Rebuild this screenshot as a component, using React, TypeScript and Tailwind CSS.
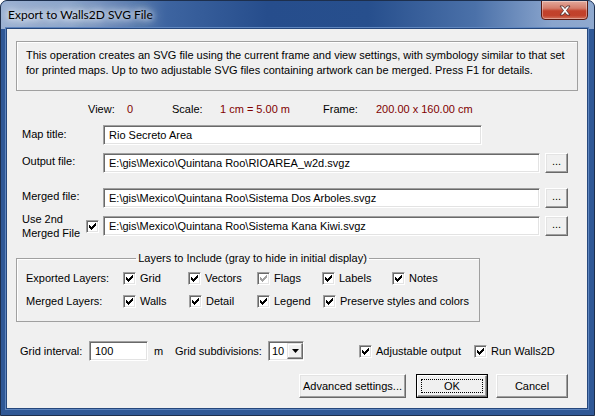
import React from "react";

const FONT = "font-['Liberation_Sans',Arial,sans-serif]";

function Check({ gray = false }: { gray?: boolean }) {
  return (
    <div
      className={`w-[13px] h-[13px] shrink-0 bg-white border border-t-[#a0a0a0] border-l-[#a0a0a0] border-r-white border-b-white shadow-[inset_1px_1px_0_#696969,inset_-1px_-1px_0_#e3e3e3] flex items-center justify-center`}
    >
      <svg width="7" height="7" viewBox="0 0 7 7" shapeRendering="crispEdges">
        <path
          d="M6 0h1v3h-1v1h-1v1h-1v1h-1v1h-1v-1h-1v-1h-1v-3h1v1h1v1h1v-1h1v-1h1z"
          fill={gray ? "#a0a0a0" : "#000"}
        />
      </svg>
    </div>
  );
}

function Field({ w, value }: { w: string; value: string }) {
  return (
    <div
      className={`h-[20px] ${w} shrink-0 bg-white border border-t-[#a0a0a0] border-l-[#a0a0a0] border-r-white border-b-white shadow-[inset_1px_1px_0_#696969,inset_-1px_-1px_0_#e3e3e3] flex items-center pl-[5px] text-[11px] text-black whitespace-nowrap overflow-hidden`}
    >
      {value}
    </div>
  );
}

function Btn({
  w,
  h,
  children,
  def = false,
}: {
  w: string;
  h: string;
  children: React.ReactNode;
  def?: boolean;
}) {
  if (def) {
    return (
      <div className={`${w} ${h} shrink-0 border border-black bg-[#f0f0f0]`}>
        <div className="w-full h-full border border-t-white border-l-white border-r-[#696969] border-b-[#696969] shadow-[inset_-1px_-1px_0_#a0a0a0] flex items-center justify-center p-[3px]">
          <div className="w-full h-full border border-dotted border-black flex items-center justify-center text-[11px] text-black">
            {children}
          </div>
        </div>
      </div>
    );
  }
  return (
    <div
      className={`${w} ${h} shrink-0 bg-[#f0f0f0] border border-t-white border-l-white border-r-[#696969] border-b-[#696969] shadow-[inset_-1px_-1px_0_#a0a0a0,inset_1px_1px_0_#e3e3e3] flex items-center justify-center text-[11px] text-black`}
    >
      {children}
    </div>
  );
}

function CbItem({
  w,
  label,
  gray = false,
}: {
  w: string;
  label: string;
  gray?: boolean;
}) {
  return (
    <div className={`${w} shrink-0 flex items-center gap-[4px]`}>
      <Check gray={gray} />
      <span className="leading-[13px] whitespace-nowrap">{label}</span>
    </div>
  );
}

export default function App() {
  return (
    <div
      className={`${FONT} w-[595px] h-[416px] flex flex-col rounded-t-[7px] border border-[#1d2f4d] bg-[#2f5896] overflow-hidden`}
    >
      {/* title bar */}
      <div className="h-[28px] shrink-0 flex items-start justify-between bg-[linear-gradient(to_right,#9bb1d2_0%,#8aa3c9_12%,#3d64a0_28%,#264d8c_45%,#274f8d_62%,#4b71a9_80%,#8aa5cd_93%,#8fa9cf_100%)]">
        <div className="pl-[7px] pt-[6px] text-[12px] leading-[16px] text-black font-['Lato',sans-serif] [text-shadow:0_0_6px_#fff,0_0_10px_#fff,0_0_14px_#dfe8f4]">
          Export to Walls2D SVG File
        </div>
        <div className="mr-[6px] -mt-[1px] w-[47px] h-[20px] rounded-b-[4px] border border-[#5a1a12] bg-[linear-gradient(to_bottom,#e3a99c_0%,#d57d6b_40%,#c2422c_55%,#c1412b_80%,#d2735d_100%)] shadow-[inset_0_0_0_1px_rgba(255,255,255,0.35)] flex items-center justify-center">
          <svg width="12" height="11" viewBox="0 0 12 11">
            <path
              d="M1 1h3l2 2.5L8 1h3L7.5 5.5L11 10H8L6 7.5L4 10H1l3.5-4.5z"
              fill="#fff"
              stroke="#4a2a2a"
              strokeWidth="0.8"
              strokeLinejoin="round"
            />
          </svg>
        </div>
      </div>

      {/* client area */}
      <div className="ml-[6px] w-[580px] h-[379px] bg-[#f0f0f0] shadow-[0_0_0_1px_#25477c,0_0_0_2px_#5f86bf] flex flex-col text-[11px] text-black">
        {/* description */}
        <div className="ml-[9px] mt-[12px] w-[562px] h-[50px] border border-[#a0a0a0] shadow-[inset_1px_1px_0_#fff] pl-[9px] pt-[6px] leading-[15px] whitespace-nowrap">
          <div>
            This operation creates an SVG file using the current frame and view settings, with symbology similar to that set
          </div>
          <div>
            for printed maps. Up to two adjustable SVG files containing artwork can be merged. Press F1 for details.
          </div>
        </div>

        {/* stats */}
        <div className="mt-[11px] h-[14px] pl-[81px] flex items-center whitespace-nowrap leading-[14px]">
          <span className="w-[39px] shrink-0">View:</span>
          <span className="w-[45px] shrink-0 text-[#800000]">0</span>
          <span className="w-[48px] shrink-0">Scale:</span>
          <span className="w-[103px] shrink-0 text-[#800000]">1 cm = 5.00 m</span>
          <span className="w-[53px] shrink-0">Frame:</span>
          <span className="text-[#800000]">200.00 x 160.00 cm</span>
        </div>

        {/* map title */}
        <div className="mt-[9px] pl-[15px] flex items-center">
          <span className="w-[81px] shrink-0 -mt-[1px]">Map title:</span>
          <Field w="w-[379px]" value="Rio Secreto Area" />
        </div>

        {/* output file */}
        <div className="mt-[8px] pl-[15px] flex items-center">
          <span className="w-[81px] shrink-0 -mt-[3px]">Output file:</span>
          <Field w="w-[437px]" value="E:\gis\Mexico\Quintana Roo\RIOAREA_w2d.svgz" />
          <div className="ml-[5px]">
            <Btn w="w-[23px]" h="h-[20px]">
              <span className="-mt-[3px]">...</span>
            </Btn>
          </div>
        </div>

        {/* merged file */}
        <div className="mt-[15px] pl-[15px] flex items-center">
          <span className="w-[81px] shrink-0 -mt-[3px]">Merged file:</span>
          <Field w="w-[437px]" value="E:\gis\Mexico\Quintana Roo\Sistema Dos Arboles.svgz" />
          <div className="ml-[5px]">
            <Btn w="w-[23px]" h="h-[20px]">
              <span className="-mt-[3px]">...</span>
            </Btn>
          </div>
        </div>

        {/* use 2nd */}
        <div className="mt-[8px] pl-[15px] flex items-center h-[20px]">
          <div className="w-[64px] shrink-0 leading-[14px] -mt-[1px]">
            <div>Use 2nd</div>
            <div>Merged File</div>
          </div>
          <Check />
          <div className="ml-[4px]">
            <Field w="w-[437px]" value="E:\gis\Mexico\Quintana Roo\Sistema Kana Kiwi.svgz" />
          </div>
          <div className="ml-[5px]">
            <Btn w="w-[23px]" h="h-[20px]">
              <span className="-mt-[3px]">...</span>
            </Btn>
          </div>
        </div>

        {/* group box */}
        <fieldset className="ml-[9px] mt-[15px] w-[464px] border border-[#a0a0a0] shadow-[inset_1px_1px_0_#fff] pt-[7px] pb-[13px] pl-[9px] min-w-0">
          <legend className="mx-auto px-[2px] leading-[14px] whitespace-nowrap">
            Layers to Include (gray to hide in initial display)
          </legend>
          <div className="flex items-center h-[13px] whitespace-nowrap">
            <span className="w-[97px] shrink-0">Exported Layers:</span>
            <CbItem w="w-[65px]" label="Grid" />
            <CbItem w="w-[69px]" label="Vectors" />
            <CbItem w="w-[65px]" label="Flags" gray />
            <CbItem w="w-[70px]" label="Labels" />
            <CbItem w="w-[60px]" label="Notes" />
          </div>
          <div className="mt-[10px] flex items-center h-[13px] whitespace-nowrap">
            <span className="w-[97px] shrink-0">Merged Layers:</span>
            <CbItem w="w-[66px]" label="Walls" />
            <CbItem w="w-[68px]" label="Detail" />
            <CbItem w="w-[66px]" label="Legend" />
            <CbItem w="w-[140px]" label="Preserve styles and colors" />
          </div>
        </fieldset>

        {/* bottom row */}
        <div className="mt-[19px] pl-[13px] flex items-center h-[20px] whitespace-nowrap">
          <span className="w-[69px] shrink-0">Grid interval:</span>
          <Field w="w-[59px]" value="100" />
          <span className="ml-[6px] w-[21px] shrink-0">m</span>
          <span className="w-[93px] shrink-0">Grid subdivisions:</span>
          <div className="w-[36px] h-[20px] shrink-0 bg-white border border-t-[#a0a0a0] border-l-[#a0a0a0] border-r-white border-b-white shadow-[inset_1px_1px_0_#696969,inset_-1px_-1px_0_#e3e3e3] flex items-center">
            <span className="pl-[3px] w-[18px] shrink-0">10</span>
            <div className="w-[16px] h-[16px] bg-[#f0f0f0] border border-t-[#e3e3e3] border-l-[#e3e3e3] border-r-[#696969] border-b-[#696969] shadow-[inset_-1px_-1px_0_#a0a0a0,inset_1px_1px_0_#fff] flex items-center justify-center">
              <svg width="7" height="4" viewBox="0 0 7 4">
                <path d="M0 0h7L3.5 4z" fill="#000" />
              </svg>
            </div>
          </div>
          <div className="ml-[55px]">
            <CbItem w="w-[115px]" label="Adjustable output" />
          </div>
          <CbItem w="w-[90px]" label="Run Walls2D" />
        </div>

        {/* buttons */}
        <div className="mt-[13px] pr-[19px] flex justify-end">
          <Btn w="w-[107px]" h="h-[24px]">Advanced settings...</Btn>
          <div className="ml-[10px]">
            <Btn w="w-[72px]" h="h-[24px]" def>
              OK
            </Btn>
          </div>
          <div className="ml-[8px]">
            <Btn w="w-[72px]" h="h-[24px]">Cancel</Btn>
          </div>
        </div>
      </div>
    </div>
  );
}
